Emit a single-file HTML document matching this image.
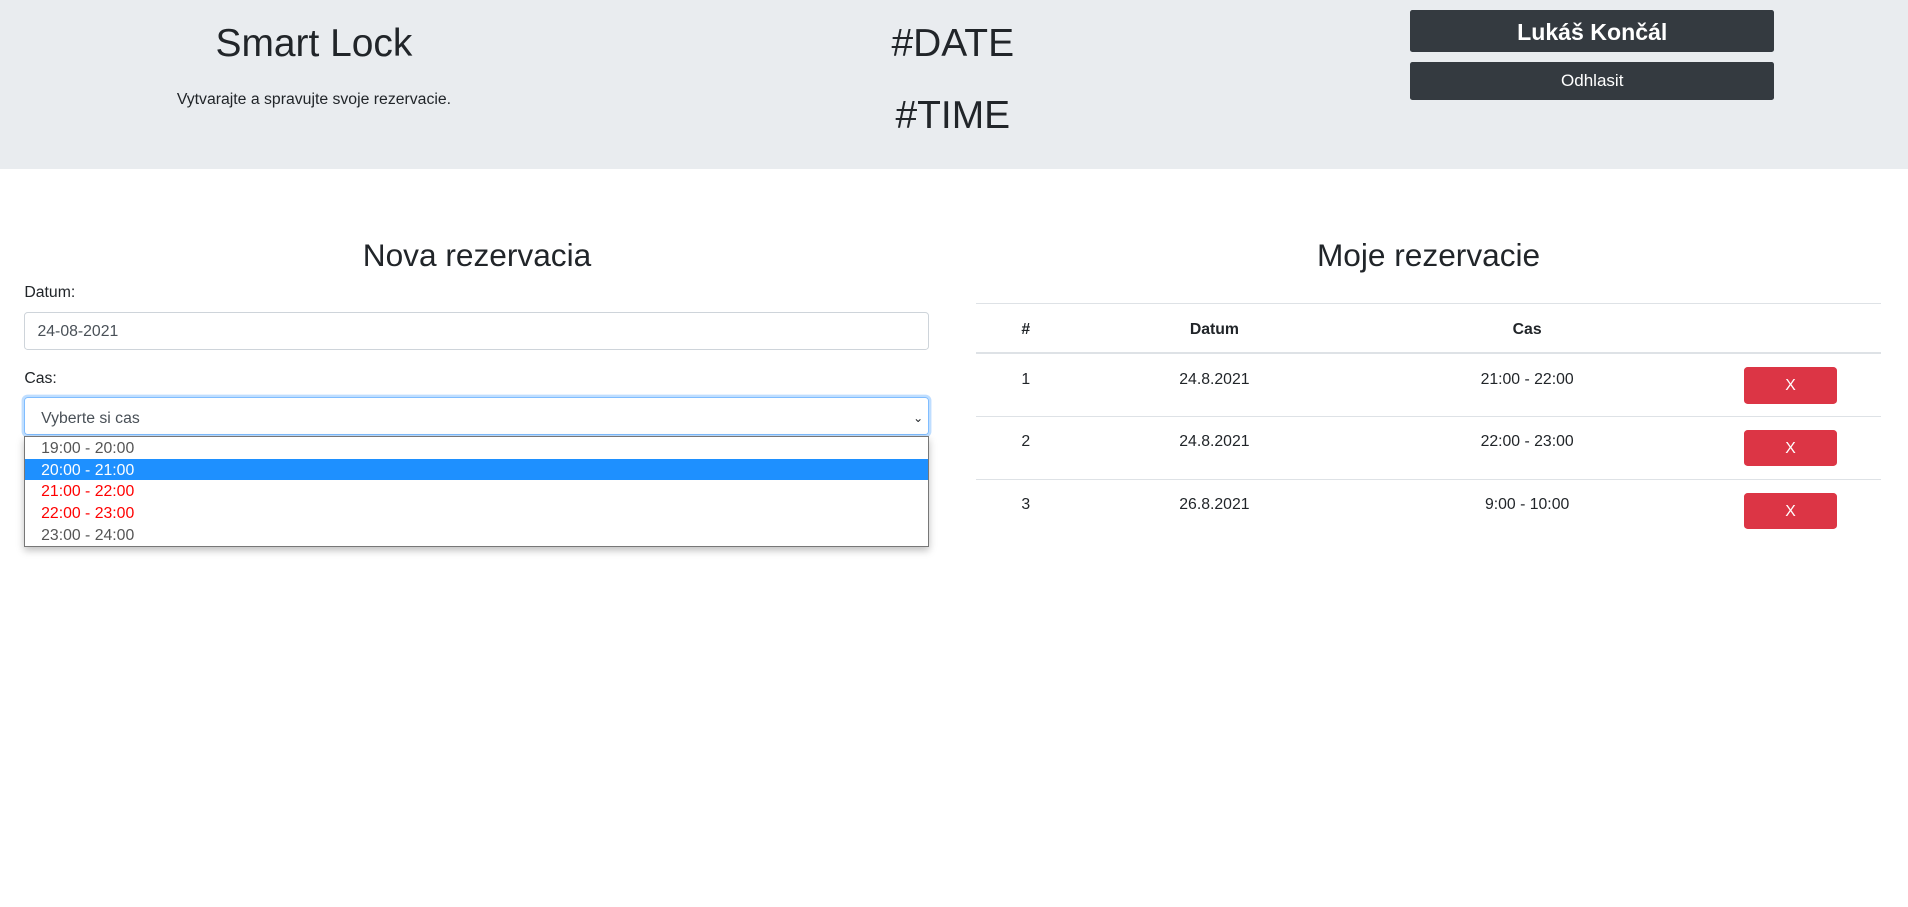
<!DOCTYPE html>
<html><head><meta charset="utf-8"><style>
html{zoom:1.21684}
body{margin:0;width:1568px;height:745px;overflow:hidden;background:#fff;font-family:"Liberation Sans",sans-serif;color:#212529;position:relative}
.a{position:absolute}
.c{text-align:center}
.hdr{left:0;top:0;width:1568px;height:139px;background:#e9ecef}
.btn{background:#343a40;color:#fff;border-radius:2px;text-align:center}
.opt{height:18px;line-height:19px;padding-left:13px;font-size:13px;color:#555}
</style></head><body>
<div class="a hdr"></div>
<div class="a c" style="left:108px;width:300px;top:18px;font-size:32px;font-weight:500">Smart Lock</div>
<div class="a c" style="left:108px;width:300px;top:75px;font-size:13px">Vytvarajte a spravujte svoje rezervacie.</div>
<div class="a c" style="left:633px;width:300px;top:18px;font-size:32px;font-weight:500">#DATE</div>
<div class="a c" style="left:633px;width:300px;top:77px;font-size:32px;font-weight:500">#TIME</div>
<div class="a btn" style="left:1159px;top:8px;width:299px;height:35px;line-height:37px;font-size:19px;font-weight:bold">Lukáš Končál</div>
<div class="a btn" style="left:1159px;top:51px;width:299px;height:31px;line-height:32px;font-size:14px">Odhlasit</div>

<div class="a c" style="left:20px;width:744px;top:195px;font-size:26px;font-weight:500">Nova rezervacia</div>
<div class="a" style="left:20px;top:233px;font-size:13px">Datum:</div>
<div class="a" style="left:20px;top:256px;width:742px;height:30px;border:1px solid #ced4da;border-radius:3px;font-size:13px;line-height:32px;box-sizing:content-box"><span style="padding-left:10px;color:#495057">24-08-2021</span></div>
<div class="a" style="left:20px;top:304px;font-size:13px">Cas:</div>
<div class="a" style="left:20px;top:326px;width:742px;height:30px;border:1px solid #80bdff;box-shadow:0 0 0 2px rgba(0,123,255,.25);border-radius:3px;font-size:13px;line-height:34px"><span style="padding-left:13px;color:#495057">Vyberte si cas</span><span style="position:absolute;right:4px;top:0;font-size:10px">&#8964;</span></div>
<div class="a" style="left:20px;top:358px;width:742px;height:90px;border:1px solid #777;background:#fff;box-shadow:0 3px 6px rgba(0,0,0,.25)">
<div class="opt">19:00 - 20:00</div>
<div class="opt" style="background:#1e90ff;color:#fff">20:00 - 21:00</div>
<div class="opt" style="color:#f00">21:00 - 22:00</div>
<div class="opt" style="color:#f00">22:00 - 23:00</div>
<div class="opt">23:00 - 24:00</div>
</div>

<div class="a c" style="left:802px;width:744px;top:195px;font-size:26px;font-weight:500">Moje rezervacie</div>
<div class="a" style="left:802px;top:249px;width:744px;border-top:1px solid #dee2e6"></div>
<div class="a" style="left:802px;top:289px;width:744px;border-top:2px solid #dee2e6"></div>
<div class="a" style="left:802px;top:342px;width:744px;border-top:1px solid #dee2e6"></div>
<div class="a" style="left:802px;top:394px;width:744px;border-top:1px solid #dee2e6"></div>
<div class="a c" style="left:823px;width:40px;top:264px;font-size:13px;font-weight:bold">#</div>
<div class="a c" style="left:938px;width:120px;top:264px;font-size:13px;font-weight:bold">Datum</div>
<div class="a c" style="left:1195px;width:120px;top:264px;font-size:13px;font-weight:bold">Cas</div>

<div class="a c" style="left:823px;width:40px;top:305px;font-size:13px">1</div>
<div class="a c" style="left:938px;width:120px;top:305px;font-size:13px">24.8.2021</div>
<div class="a c" style="left:1195px;width:120px;top:305px;font-size:13px">21:00 - 22:00</div>
<div class="a c" style="left:1433px;top:302px;width:77px;height:30px;line-height:32px;background:#dc3545;color:#fff;border-radius:3px;font-size:13px">X</div>

<div class="a c" style="left:823px;width:40px;top:356px;font-size:13px">2</div>
<div class="a c" style="left:938px;width:120px;top:356px;font-size:13px">24.8.2021</div>
<div class="a c" style="left:1195px;width:120px;top:356px;font-size:13px">22:00 - 23:00</div>
<div class="a c" style="left:1433px;top:353px;width:77px;height:30px;line-height:32px;background:#dc3545;color:#fff;border-radius:3px;font-size:13px">X</div>

<div class="a c" style="left:823px;width:40px;top:408px;font-size:13px">3</div>
<div class="a c" style="left:938px;width:120px;top:408px;font-size:13px">26.8.2021</div>
<div class="a c" style="left:1195px;width:120px;top:408px;font-size:13px">9:00 - 10:00</div>
<div class="a c" style="left:1433px;top:405px;width:77px;height:30px;line-height:32px;background:#dc3545;color:#fff;border-radius:3px;font-size:13px">X</div>
</body></html>
